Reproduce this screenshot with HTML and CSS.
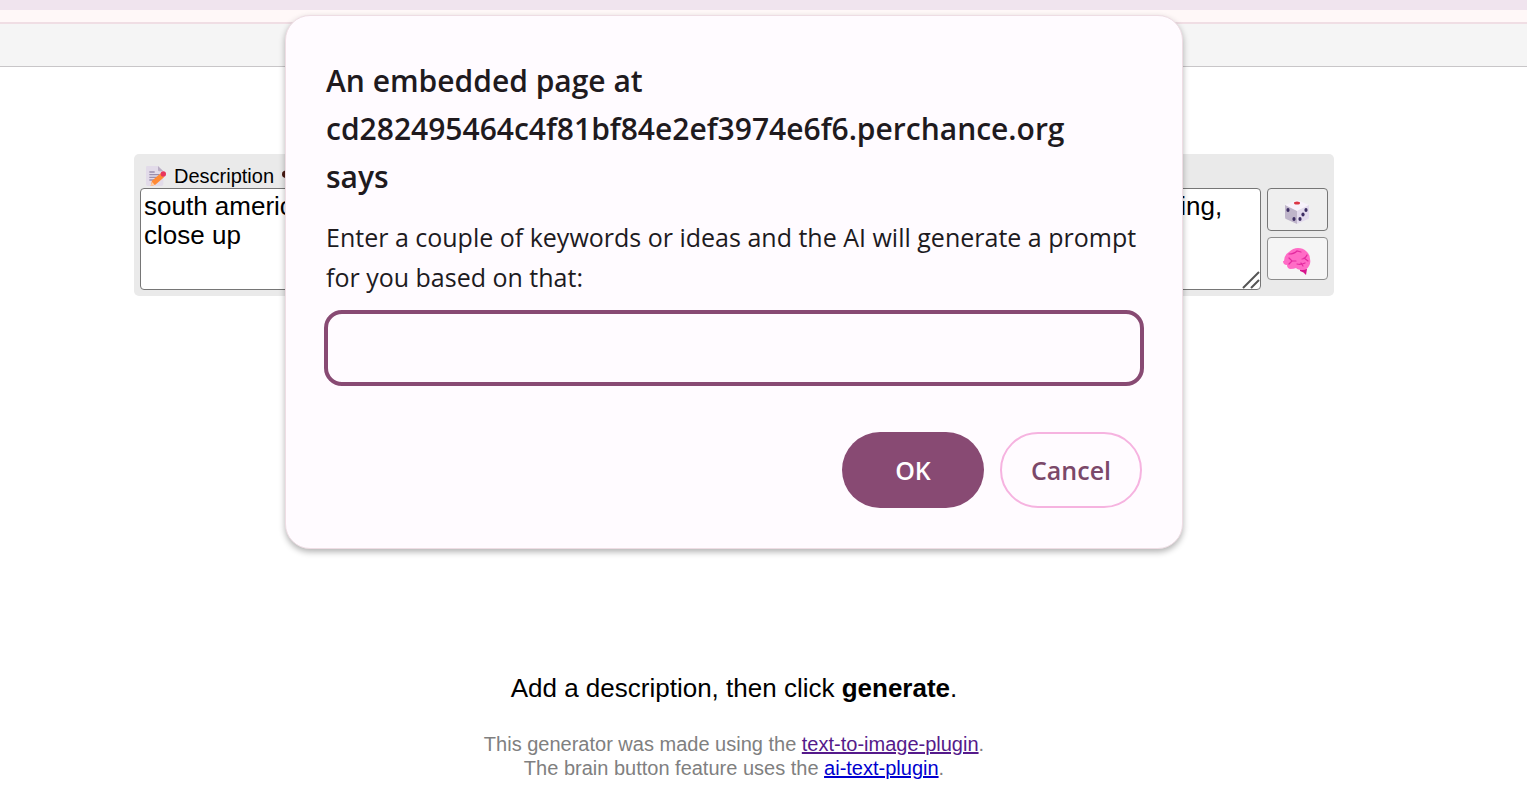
FILE: index.html
```
<!DOCTYPE html>
<html lang="en">
<head>
  <meta charset="UTF-8">
  <meta name="viewport" content="width=device-width, initial-scale=1.0">
  <title>AI Image Generator</title>
  <link rel="stylesheet" href="styles.css">
</head>
<body>
  <div class="browser-bar"></div>
  <div class="browser-line"></div>
  <div class="top-menu"></div>

  <main class="page">
    <section class="panel">
      <label class="panel-label" for="description">
        <svg class="label-icon" viewBox="3 1 30 30" aria-hidden="true">
          <path d="M3 3q0-2 2-2h16l8 8v19q0 3-3 3H6q-3 0-3-3z" fill="#e2dbe9"/>
          <path d="M21 1l8 8h-6q-2 0-2-2z" fill="#b9adc4"/>
          <path d="M8 10h8M8 14h15M8 18h12M8 22h8" stroke="#9b8fae" stroke-width="2" fill="none"/>
          <path d="M10 31l2-8 13-11 5 6-13 11z" fill="#ff8a35"/>
          <path d="M10 31l2-6 4 4z" fill="#ffd0a6"/>
          <path d="M25 12l2-2 5 5-2 2z" fill="#b8aec8"/>
          <circle cx="29" cy="13" r="4" fill="#e8355c"/>
        </svg>
        <span>Description</span>
        <svg class="label-icon" viewBox="0 0 32 32" aria-hidden="true">
          <ellipse cx="7" cy="13" rx="7" ry="6" fill="#4a1a12"/>
          <path d="M18 9q4 5 0 10M23 6q6 8 0 16" stroke="#4a1a12" stroke-width="2" fill="none"/>
        </svg>
      </label>
      <div class="prompt-row">
        <div class="prompt-box">
          <textarea id="description" class="prompt-input" spellcheck="false">south american woman in the mountains, golden hour, misty natural light, detailed oil painting, close up</textarea>
          <svg class="resize-grip" viewBox="0 0 18 18" aria-hidden="true">
            <path d="M1 17L17 1M9 17l8-8" stroke="#555" stroke-width="2" fill="none"/>
          </svg>
        </div>
        <div class="side-buttons">
          <button class="side-button" type="button" aria-label="Random description">
            <svg class="side-icon" viewBox="0 0 28 28" aria-hidden="true">
              <path d="M14 2L2 7l12 6 12-6z" fill="#f7f2fb"/>
              <path d="M2 7l12 6v13L3 21q-1 0-1-2z" fill="#bfb5ca"/>
              <path d="M26 7l-12 6v13l11-5q1 0 1-2z" fill="#e3dbed"/>
              <ellipse cx="14" cy="5" rx="3" ry="1.5" fill="#dc3545"/>
              <g fill="#3d2e63">
                <ellipse cx="5" cy="12" rx="1.6" ry="2"/>
                <ellipse cx="11" cy="21" rx="1.6" ry="2"/>
                <ellipse cx="23" cy="12" rx="1.6" ry="2"/>
                <ellipse cx="20" cy="16.500" rx="1.6" ry="2"/>
                <ellipse cx="17" cy="21" rx="1.6" ry="2"/>
              </g>
            </svg>
          </button>
          <button class="side-button side-button-light" type="button" aria-label="Write a description with AI">
            <svg class="side-icon" viewBox="0 0 28 28" aria-hidden="true">
              <path d="M17 21l7 1-1 6q-2-3-6-4z" fill="#d6168c"/>
              <path d="M1 14Q1 8 6 5q4-4 9-4 5 0 8 3 4 3 4 8 1 4-1 7-2 4-6 4-5 0-7-2-2 1-6 1-3-1-3-4-4 0-4-4z" fill="#ff6cc6"/>
              <path d="M6 7q5 0 8-3l4 1M6 11l3 3h4M6 17l3-3M14 17q4 1 8-1M18 16l2 3M19 12q3 0 5-4M21 11l4 3" stroke="#e42ba0" stroke-width="1.2" stroke-linecap="round" fill="none"/>
            </svg>
          </button>
        </div>
      </div>
    </section>

    <footer class="notes">
      <p class="hint">Add a description, then click <b>generate</b>.</p>
      <p class="credits">
        This generator was made using the <a class="visited" href="#text-to-image-plugin">text-to-image-plugin</a>.<br>
        The brain button feature uses the <a href="#ai-text-plugin">ai-text-plugin</a>.
      </p>
    </footer>
  </main>

  <div class="dialog-layer">
    <form class="dialog" role="dialog" aria-labelledby="dialog-title">
      <h1 class="dialog-title" id="dialog-title">An embedded page at<br>cd282495464c4f81bf84e2ef3974e6f6.perchance.org<br>says</h1>
      <label class="dialog-text" for="keywords">Enter a couple of keywords or ideas and the AI will generate a prompt for you based on that:</label>
      <input class="dialog-input" id="keywords" type="text">
      <div class="dialog-buttons">
        <button class="dialog-button ok" type="button">OK</button>
        <button class="dialog-button cancel" type="button">Cancel</button>
      </div>
    </form>
  </div>
</body>
</html>
```
FILE: styles.css
```
* {
  box-sizing: border-box;
}
body {
  margin: 0;
  background-color: #fff;
  font-family: "Liberation Sans", Arial, sans-serif;
  font-size: 26px;
  color: #000;
}

/* browser chrome */
.browser-bar {
  height: 10px;
  background-color: #f0e4ee;
}
.browser-line {
  height: 14px;
  background-color: #fff8f8;
  border-bottom: 2px solid #f0dee4;
}
.top-menu {
  height: 43px;
  background-color: #f5f5f5;
  border-bottom: 1px solid #c8c6c8;
}

/* generator */
.page {
  padding: 87px 59px 24px 0;
}
.panel {
  max-width: 1200px;
  margin: 0 auto;
  padding: 6px;
  border-radius: 5px;
  background-color: #eaeaea;
}
.panel-label {
  display: flex;
  align-items: center;
  gap: 8px;
  height: 28px;
  padding: 4px 6px 0;
  font-size: 20px;
}
.label-icon {
  width: 20px;
  height: 20px;
}
.prompt-row {
  display: flex;
  gap: 6px;
}
.prompt-box {
  position: relative;
  flex: 1;
  height: 102px;
}
.prompt-input {
  display: block;
  width: 100%;
  height: 100%;
  padding: 3px;
  border: 1px solid #767676;
  border-radius: 4px;
  background-color: #fff;
  color: #000;
  font-family: inherit;
  font-size: 26px;
  line-height: 29px;
  resize: none;
  overflow: hidden;
}
.resize-grip {
  position: absolute;
  right: 1px;
  bottom: 1px;
  width: 18px;
  height: 18px;
}
.side-buttons {
  display: flex;
  flex-direction: column;
  gap: 6px;
}
.side-button {
  display: flex;
  align-items: center;
  justify-content: center;
  width: 61px;
  height: 43px;
  padding: 4px 2px 0 0;
  border: 1px solid #767676;
  border-radius: 4px;
  background-color: #efefef;
  cursor: pointer;
}
.side-button-light {
  border-color: #8d8d8d;
  background-color: #f5f5f5;
}
.side-icon {
  width: 28px;
  height: 28px;
}

/* text under the generator */
.notes {
  margin-top: 376px;
  text-align: center;
}
.hint {
  margin: 0 0 28px;
  line-height: 32px;
}
.credits {
  margin: 0;
  color: #808080;
  font-size: 20px;
  line-height: 24px;
}
.credits a {
  color: #0000d0;
}
.credits a.visited {
  color: #551a8b;
}

/* prompt dialog */
.dialog-layer {
  position: absolute;
  top: 15px;
  left: 0;
  right: 0;
  padding-right: 59px;
}
.dialog {
  max-width: 898px;
  margin: 0 auto;
  padding: 41px 40px 40px;
  border: 1px solid #eedde4;
  border-radius: 25px;
  background-color: #fffbff;
  box-shadow: 0 3px 6px rgba(0, 0, 0, 0.3);
  color: #201a1e;
  font-family: "Segoe UI", "Open Sans", "Noto Sans", sans-serif;
}
.dialog-title {
  margin: 0 0 16px;
  font-size: 30px;
  font-weight: 600;
  line-height: 48px;
}
.dialog-text {
  display: block;
  margin-bottom: 15px;
  font-size: 25px;
  line-height: 40px;
}
.dialog-input {
  display: block;
  width: 100%;
  height: 72px;
  padding: 0 16px;
  border: 0;
  border-radius: 16px;
  outline: 4px solid #884a73;
  outline-offset: -2px;
  background-color: #fffbff;
  color: inherit;
  font-family: inherit;
  font-size: 25px;
}
.dialog-buttons {
  display: flex;
  justify-content: flex-end;
  gap: 16px;
  margin-top: 48px;
}
.dialog-button {
  width: 142px;
  height: 76px;
  padding: 0;
  border-radius: 38px;
  font-family: inherit;
  font-size: 25px;
  font-weight: 600;
  cursor: pointer;
}
.ok {
  border: 0;
  background-color: #884a73;
  color: #fff;
}
.cancel {
  border: 2px solid #f6b3e0;
  background-color: #fffbff;
  color: #7b4869;
}
```
